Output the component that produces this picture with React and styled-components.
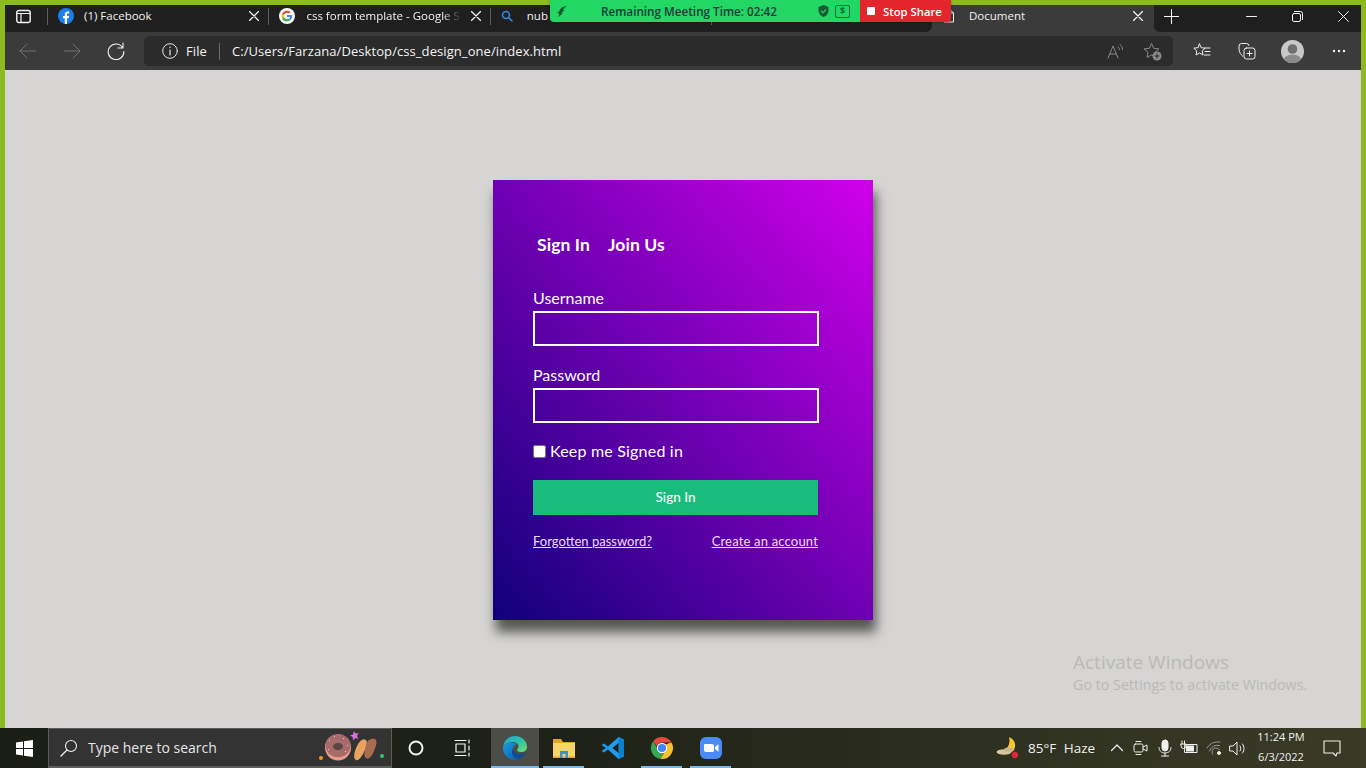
import React from 'react';
import styled, {createGlobalStyle} from 'styled-components';

const GlobalStyle = createGlobalStyle`
  html, body { margin: 0; padding: 0; height: 100%; overflow: hidden; background: #d6d5d3; }
  * { box-sizing: border-box; }
  body { font-family: "Open Sans", "Noto Sans", sans-serif; }
`;

const Screen = styled.div`
  position: relative;
  width: 1366px;
  height: 768px;
  display: flex;
  flex-direction: column;
  overflow: hidden;
`;

const Browser = styled.div`
  flex: 1;
  min-height: 0;
  display: flex;
  flex-direction: column;
  border: 5px solid #8dbb1f;
  border-bottom: 0;
`;

const TabBar = styled.div`
  height: 27px;
  background: #3b3b3b;
  display: flex;
  align-items: stretch;
  flex-shrink: 0;
`;

const TabStrip = styled.div`
  display: flex;
  background: #1f1f1f;
  border-radius: 0 0 6px 0;
`;

const TabRest = styled.div`
  flex: 1;
  display: flex;
  background: #1f1f1f;
  border-radius: 0 0 0 6px;
`;

const SideButton = styled.div`
  width: 42px;
  display: flex;
  align-items: center;
  justify-content: center;
  padding: 0 5px 5px 0;
`;

const Tab = styled.div`
  flex: 0 0 ${p => p.$w || 221.4}px;
  min-width: 0;
  height: 27px;
  display: flex;
  align-items: center;
  position: relative;
  padding: 0 ${p => p.$active ? 11 : 9}px 5px ${p => p.$active ? 10 : 11}px;
  gap: ${p => p.$active ? 13 : 10}px;
  color: #f2f2f2;
  font-size: 11.5px;
  background: ${p => p.$active ? '#3b3b3b' : 'transparent'};
  &::before {
    content: "";
    display: ${p => p.$sep ? 'block' : 'none'};
    position: absolute;
    left: 0;
    top: 3px;
    height: 17px;
    width: 1px;
    background: #5c5c5c;
  }
`;

const TabTitle = styled.span`
  flex: 1;
  min-width: 0;
  margin: -2px 0 0 ${p => p.$indent || 0}px;
  white-space: nowrap;
  ${p => p.$fade && `
    -webkit-mask-image: linear-gradient(to right, #000 88%, transparent);
    mask-image: linear-gradient(to right, #000 88%, transparent);
  `}
`;

const NewTab = styled.div`
  width: 36px;
  display: flex;
  align-items: center;
  justify-content: center;
  padding-bottom: 5px;
`;

const WindowControls = styled.div`
  margin-left: auto;
  margin-right: -5px;
  display: flex;
  align-items: center;
`;

const WindowButton = styled.div`
  width: 46px;
  height: 27px;
  display: flex;
  align-items: center;
  justify-content: center;
  padding-bottom: 5px;
`;

const Toolbar = styled.div`
  height: 38px;
  background: #3b3b3b;
  display: flex;
  align-items: center;
  padding-left: 1px;
  flex-shrink: 0;
`;

const NavButton = styled.div`
  width: ${p => p.$w || 44}px;
  height: 30px;
  display: flex;
  align-items: center;
  justify-content: center;
  flex-shrink: 0;
`;

const AddressBar = styled.div`
  width: 1030px;
  height: 30px;
  margin-left: 6px;
  margin-right: 6px;
  background: #2b2b2b;
  border-radius: 5px;
  display: flex;
  align-items: center;
  padding: 0 2px 0 18px;
  color: #f4f4f4;
  font-size: 13px;
  letter-spacing: .08px;
`;

const FileLabel = styled.span`
  margin-left: 8px;
  padding-right: 12px;
  border-right: 1px solid #6a6a6a;
  line-height: 17px;
`;

const Url = styled.span`
  margin-left: 12px;
  flex: 1;
`;

const Page = styled.main`
  flex: 1;
  min-height: 0;
  background: #d6d5d3;
  display: flex;
  justify-content: center;
  padding-top: 110px;
`;

const Card = styled.section`
  width: 380px;
  height: 440px;
  padding: 52px 55px 0 40px;
  color: #fff;
  background: linear-gradient(to top right, #0f007a, #d000ea);
  box-shadow: 3px 12px 11px #555553;
  font-family: "Lato", sans-serif;
  display: flex;
  flex-direction: column;
`;

const CardTabs = styled.div`
  display: flex;
  gap: 18px;
  padding-left: 4px;
  font-size: 17.5px;
  font-weight: 700;
  letter-spacing: .1px;
  line-height: 26px;
  margin-bottom: 30px;
`;

const Field = styled.div`
  margin-bottom: 19px;
`;

const FieldLabel = styled.label`
  display: block;
  font-size: 16px;
  line-height: 22px;
  margin: -1px 0 2px;
`;

const TextInput = styled.input`
  display: block;
  width: 286px;
  height: 35px;
  border: 2px solid #fff;
  background: transparent;
  border-radius: 0;
  outline: none;
`;

const KeepRow = styled.label`
  display: flex;
  align-items: center;
  gap: 4px;
  font-size: 16px;
  letter-spacing: .2px;
  line-height: 22px;
  margin: -2px 0 18px;
`;

const Check = styled.input`
  width: 13px;
  height: 13px;
  margin: 0;
`;

const SubmitButton = styled.button`
  width: 285px;
  height: 35px;
  padding: 0 0 2px;
  background: #1abc7c;
  border: 0;
  color: #fff;
  font-family: "Lato", sans-serif;
  font-size: 13.5px;
  font-weight: 500;
  margin-bottom: 17px;
`;

const LinkRow = styled.div`
  width: 285px;
  display: flex;
  justify-content: space-between;
`;

const CardLink = styled.a`
  color: #f0dcf8;
  font-size: 13px;
  letter-spacing: ${p => p.$wide ? '.18px' : '0'};
  line-height: 18px;
  text-decoration: underline;
`;

const Watermark = styled.div`
  position: absolute;
  left: 1073px;
  top: 650px;
  color: #bbbab8;
`;

const WatermarkTitle = styled.div`
  font-size: 19px;
  line-height: 24px;
`;

const WatermarkText = styled.div`
  font-size: 14.3px;
  line-height: 22px;
`;

const MeetingBar = styled.div`
  position: absolute;
  left: 550px;
  top: 0;
  height: 22px;
  display: flex;
  box-shadow: 0 0 3px rgba(0, 0, 0, .35);
  border-radius: 0 0 4px 4px;
  overflow: hidden;
`;

const MeetingInfo = styled.div`
  width: 310px;
  background: #22d764;
  color: #1c3a3c;
  display: flex;
  align-items: center;
  padding-left: 7px;
  font-size: 11.7px;
  font-weight: 600;
`;

const MeetingText = styled.span`
  margin-left: 34px;
  width: 217px;
  white-space: nowrap;
`;

const DollarBox = styled.span`
  width: 15px;
  height: 13px;
  margin-left: 6px;
  border: 1.5px solid #136b3a;
  border-radius: 2px;
  color: #136b3a;
  font-size: 9px;
  font-weight: 700;
  line-height: 10px;
  text-align: center;
`;

const StopShare = styled.div`
  width: 91px;
  background: #e3262e;
  color: #fff;
  display: flex;
  align-items: center;
  gap: 8px;
  padding-left: 7px;
  font-size: 11.3px;
  font-weight: 600;
  white-space: nowrap;
`;

const StopSquare = styled.span`
  width: 8px;
  height: 8px;
  background: #fff;
  border-radius: 1px;
`;

const Taskbar = styled.footer`
  height: 40px;
  flex-shrink: 0;
  display: flex;
  align-items: stretch;
  background: linear-gradient(to right, #1a1e14 0%, #1d2116 40%, #2f3220 75%, #3a3a26 100%);
  color: #f0f0f0;
`;

const StartButton = styled.div`
  width: 48px;
  display: flex;
  align-items: center;
  justify-content: center;
`;

const SearchBox = styled.div`
  width: 344px;
  background: #333333;
  border: 1px solid #5c5c5c;
  border-bottom-width: 2px;
  display: flex;
  align-items: center;
  padding-left: 11px;
  gap: 10px;
  font-size: 14px;
  color: #e6e6e6;
  position: relative;
`;

const SearchArt = styled.svg`
  position: absolute;
  right: 2px;
  top: 2px;
`;

const TaskIcon = styled.div`
  width: ${p => p.$w || 47}px;
  margin-left: ${p => p.$ml || 0}px;
  display: flex;
  align-items: center;
  justify-content: center;
  flex-shrink: 0;
  position: relative;
  background: ${p => p.$active ? '#4b4d46' : 'transparent'};
  &::after {
    content: "";
    display: ${p => p.$open ? 'block' : 'none'};
    position: absolute;
    left: ${p => p.$active ? 0 : 4}px;
    right: ${p => p.$active ? 0 : 4}px;
    bottom: 0;
    height: 2px;
    background: #76b9ed;
  }
`;

const Tray = styled.div`
  margin-left: auto;
  padding-right: 15px;
  display: flex;
  align-items: center;
`;

const TraySlot = styled.div`
  width: ${p => p.$w}px;
  height: 40px;
  display: flex;
  align-items: center;
  justify-content: center;
  flex-shrink: 0;
`;

const Weather = styled.span`
  font-size: 13.5px;
  white-space: nowrap;
  word-spacing: 4px;
  margin-left: 5px;
  width: 77px;
`;

const Clock = styled.div`
  width: 64px;
  text-align: center;
  font-size: 11px;
  line-height: 20px;
  margin-top: -2px;
`;

const line = {fill: 'none', stroke: 'currentColor', strokeWidth: 1, strokeLinecap: 'round', strokeLinejoin: 'round'};

const Icon = ({size = 16, vb = 16, color = '#e8e8e8', children}) => (
    <svg width={size} height={size} viewBox={`0 0 ${vb} ${vb}`} style={{color, display: 'block', flexShrink: 0}}>
        <g {...line}>{children}</g>
    </svg>
);

const CloseIcon = () => (
    <Icon size={10} vb={10} color="#f2f2f2"><path d="M.5.5l9 9M9.500.5l-9 9" strokeWidth="1.300"/></Icon>
);

const FacebookIcon = () => (
    <svg width="16" height="16" viewBox="0 0 16 16" style={{flexShrink: 0}}>
        <circle cx="8" cy="8" r="8" fill="#1a7df0"/>
        <path d="M6.800 16V10.200H5V8h1.800V6.400C6.800 4.500 7.900 3.500 9.600 3.500c.8 0 1.500.1 1.500.1v1.800h-.9c-.9 0-1.200.6-1.200 1.100V8h2l-.3 2.200H9v5.800z" fill="#fff"/>
    </svg>
);

const GoogleIcon = () => (
    <svg width="16" height="16" viewBox="0 0 16 16" style={{flexShrink: 0}}>
        <circle cx="8" cy="8" r="8" fill="#fff"/>
        <path d="M13.200 8.100c0-.4 0-.7-.1-1H8v2h3a2.500 2.500 0 0 1-1.100 1.600l1.700 1.300c1-.9 1.600-2.300 1.600-3.900z" fill="#4285f4"/>
        <path d="M8 13.300c1.400 0 2.600-.5 3.500-1.300l-1.700-1.300c-.5.3-1.100.5-1.800.5-1.400 0-2.600-.9-3-2.200H3.200v1.400A5.300 5.300 0 0 0 8 13.300z" fill="#34a853"/>
        <path d="M5 9a3.200 3.200 0 0 1 0-2V5.600H3.200a5.300 5.300 0 0 0 0 4.800z" fill="#fbbc05"/>
        <path d="M8 4.800c.8 0 1.500.3 2 .8l1.500-1.500A5.300 5.300 0 0 0 3.200 5.600L5 7c.4-1.300 1.600-2.200 3-2.200z" fill="#ea4335"/>
    </svg>
);

const EdgeLogo = () => (
    <svg width="26" height="26" viewBox="0 0 26 26">
        <defs>
            <linearGradient id="edgeTop" x1="0" y1="0" x2="1" y2="1">
                <stop offset="0" stopColor="#1aa5d8"/>
                <stop offset=".6" stopColor="#35c7a0"/>
                <stop offset="1" stopColor="#7be06a"/>
            </linearGradient>
            <linearGradient id="edgeLeft" x1="0" y1="0" x2="1" y2="1">
                <stop offset="0" stopColor="#1b9de2"/>
                <stop offset="1" stopColor="#0c59a4"/>
            </linearGradient>
        </defs>
        <path d="M1 12C2 5 7 1 13 1c7 0 12 5 12 11 0 3-2.500 5-6 5-2.500 0-4-1-4-2 0-.8 1.500-1.500 1.500-3.500C16.500 8.500 14 7 11 7 6 7 2 9 1 12z" fill="url(#edgeTop)"/>
        <path d="M1 12c-.5 7 5 13 12 13 2 0 4-.5 5-1.200-4 .7-8-2.300-8-7 0-3.500 2.500-6.800 5-8.300C9 6.500 2.500 8 1 12z" fill="url(#edgeLeft)"/>
        <path d="M10 16.800c0 4.700 4 7.700 8 7 2.500-1 5-3.300 5.800-6-1 .8-2.800 1.200-4.800 1.200-4 0-6.500-1.500-7-4-.8.300-2 .8-2 1.800z" fill="#0f4d96"/>
    </svg>
);

const FolderLogo = () => (
    <svg width="24" height="22" viewBox="0 0 24 22">
        <path d="M1 2h8l2 3h12v3H1z" fill="#e0a526"/>
        <rect x="1" y="6" width="22" height="15" fill="#f8d568"/>
        <rect x="1" y="19.500" width="22" height="1.500" fill="#e6a92a"/>
        <path d="M8 21v-7h8v7h-2.500v-4h-3v4z" fill="#3f8fd6"/>
    </svg>
);

const VsCodeLogo = () => (
    <svg width="24" height="24" viewBox="0 0 24 24">
        <path d="M17.500 1L23 3.500v17L17.500 23 7 13.500l-4 3-2.500-1.500 4.500-3-4.500-3L3 7.500l4 3z" fill="#1f9cf0"/>
        <path d="M17.500 1L23 3.500v17L17.500 23z" fill="#0f80cc"/>
        <path d="M17.500 7l-6 5 6 5z" fill="#1d2116"/>
    </svg>
);

const ChromeLogo = () => (
    <svg width="24" height="24" viewBox="0 0 24 24">
        <path d="M12 1a11 11 0 0 1 9.500 5.500H12a5.500 5.500 0 0 0-5.200 3.700L3.200 5.300A11 11 0 0 1 12 1z" fill="#e8453c"/>
        <path d="M3.200 5.300l4.800 8.400a5.500 5.500 0 0 0 5.500 3.600L10.500 22.900A11 11 0 0 1 3.200 5.300z" fill="#34a853"/>
        <path d="M21.500 6.500A11 11 0 0 1 10.500 22.900l5-8.600A5.500 5.500 0 0 0 16 8.200z" fill="#fbc02d"/>
        <circle cx="12" cy="12" r="5.200" fill="#fff"/>
        <circle cx="12" cy="12" r="4.100" fill="#4285f4"/>
    </svg>
);

const ZoomLogo = () => (
    <svg width="24" height="24" viewBox="0 0 24 24">
        <rect x="1" y="1" width="22" height="22" rx="6" fill="#4a8cf7"/>
        <path d="M5 9a1 1 0 0 1 1-1h7a2 2 0 0 1 2 2v5a1 1 0 0 1-1 1H7a2 2 0 0 1-2-2z" fill="#fff"/>
        <path d="M16 11l3-2.500c.3-.2.500 0 .5.300v6.400c0 .3-.2.500-.5.300L16 13z" fill="#fff"/>
    </svg>
);

const DonutArt = () => (
    <SearchArt width="72" height="34" viewBox="0 0 72 34">
        <circle cx="4" cy="27" r="2" fill="#f0a020"/>
        <circle cx="21" cy="16.500" r="13" fill="#e79c88"/>
        <ellipse cx="21" cy="14.500" rx="12.500" ry="11.500" fill="#a86a6a"/>
        <ellipse cx="21" cy="15.500" rx="5" ry="3.500" fill="#5a4642"/>
        <path d="M12 9l1 1M26 7l1 1M30 14l1 1M11 18l1 1M17 6l1-1M29 20l-1 1" stroke="#e8c4d8" strokeWidth="1"/>
        <path d="M39 29c-3-1-2-8 1-14s6-8 9-6c2 2 0 9-3 14s-5 7-7 6z" fill="#e8a45e"/>
        <path d="M49 27c-3-2-1-8 0-13s5-7 9-6c3 2 1 7-1 12s-5 9-8 7z" fill="#a86c52"/>
        <path d="M37 0l1.500 2.500L41.500 2 40 5l1.500 3-3-1-2.500 2.500-.3-3.500L33 4.500l3-1z" fill="#d86fe0"/>
        <circle cx="65" cy="25" r="2" fill="#35c76a"/>
    </SearchArt>
);

function App() {
    return (
        <Screen>
            <GlobalStyle/>
            <Browser>
                <TabBar>
                    <TabStrip>
                        <SideButton>
                            <Icon size={15} vb={15} color="#f4f4f4">
                                <rect x=".8" y="1.500" width="13.400" height="12" rx="2" strokeWidth="1.400"/>
                                <path d="M.8 4.500h13.400M5 4.500v9" strokeWidth="1.200"/>
                            </Icon>
                        </SideButton>
                        <Tab $sep>
                            <FacebookIcon/>
                            <TabTitle>(1) Facebook</TabTitle>
                            <CloseIcon/>
                        </Tab>
                        <Tab $sep>
                            <GoogleIcon/>
                            <TabTitle $indent={1} $fade>css form template - Google S</TabTitle>
                            <CloseIcon/>
                        </Tab>
                        <Tab $sep>
                            <Icon size={12} vb={12} color="#2f8fe0">
                                <circle cx="5" cy="5" r="3.500" strokeWidth="1.500"/>
                                <path d="M8 8l3 3" strokeWidth="1.500"/>
                            </Icon>
                            <TabTitle $indent={4}>nub</TabTitle>
                        </Tab>
                        <Tab $sep $w={220.800}/>
                    </TabStrip>
                    <Tab $active $w={222}>
                        <Icon size={14} vb={14} color="#efefef">
                            <path d="M2.500 1h6l3 3v9h-9zM8.500 1v3h3"/>
                        </Icon>
                        <TabTitle>Document</TabTitle>
                        <CloseIcon/>
                    </Tab>
                    <TabRest>
                        <NewTab>
                            <Icon size={15} vb={15} color="#fff"><path d="M7.500 .5v14M.5 7.500h14"/></Icon>
                        </NewTab>
                        <WindowControls>
                            <WindowButton>
                                <Icon size={11} vb={11} color="#f0f0f0"><path d="M.5 5.500h10"/></Icon>
                            </WindowButton>
                            <WindowButton>
                                <Icon size={11} vb={11} color="#f0f0f0">
                                    <rect x=".5" y="2.500" width="8" height="8" rx="1.500"/>
                                    <path d="M2.500.5h6a2 2 0 0 1 2 2v6"/>
                                </Icon>
                            </WindowButton>
                            <WindowButton>
                                <Icon size={11} vb={11} color="#f0f0f0"><path d="M.5.5l10 10M10.500.5l-10 10"/></Icon>
                            </WindowButton>
                        </WindowControls>
                    </TabRest>
                </TabBar>
                <Toolbar>
                    <NavButton>
                        <Icon size={18} vb={18} color="#707070"><path d="M17 9H1M8 2L1 9l7 7"/></Icon>
                    </NavButton>
                    <NavButton>
                        <Icon size={18} vb={18} color="#707070"><path d="M1 9h16M10 2l7 7-7 7"/></Icon>
                    </NavButton>
                    <NavButton>
                        <Icon size={18} vb={18} color="#efefef">
                            <path d="M15.500 5.500A7.800 7.800 0 1 0 16.800 9.500M16 1v5h-5" strokeWidth="1.100"/>
                        </Icon>
                    </NavButton>
                    <AddressBar>
                        <Icon size={16} vb={16} color="#e6e6e6">
                            <circle cx="8" cy="8" r="7.300"/>
                            <path d="M8 7v5M8 4v.6" strokeWidth="1.200"/>
                        </Icon>
                        <FileLabel>File</FileLabel>
                        <Url>C:/Users/Farzana/Desktop/css_design_one/index.html</Url>
                        <NavButton $w={36}>
                            <Icon size={17} vb={17} color="#8a8a8a">
                                <path d="M1 15L6 3l5 12M2.800 11h6.400M11 4c1 .6 1.500 1.400 1.500 2.500M13 1.500c1.500 1 2.500 2.800 2.500 5"/>
                            </Icon>
                        </NavButton>
                        <NavButton $w={38}>
                            <svg width="19" height="19" viewBox="0 0 19 19">
                                <path d="M8.500 1.500l2.200 4.800 5.200.6-3.900 3.500 1 5.100-4.500-2.600-4.500 2.600 1-5.100L1.100 6.900l5.200-.6z" fill="none" stroke="#8a8a8a" strokeWidth="1" strokeLinejoin="round"/>
                                <circle cx="14" cy="14" r="4.500" fill="#8a8a8a"/>
                                <path d="M14 11.500v5M11.500 14h5" stroke="#2b2b2b" strokeWidth="1"/>
                            </svg>
                        </NavButton>
                    </AddressBar>
                    <NavButton $w={46}>
                        <Icon size={18} vb={18} color="#efefef">
                            <path d="M6.500 2l1.700 3.700 4 .5-3 2.700.8 4L6.500 11 3 13l.8-4-3-2.800 4-.5zM12 6h5M12 9.500h5M11 13h6"/>
                        </Icon>
                    </NavButton>
                    <NavButton $w={43}>
                        <Icon size={18} vb={18} color="#efefef">
                            <rect x="6" y="6" width="11" height="11" rx="2.500"/>
                            <path d="M11.500 9v5M9 11.500h5M5 14.500C3 13 1 10 1 7V4a2.500 2.500 0 0 1 2.500-2.500h5A2.500 2.500 0 0 1 11 3.500"/>
                        </Icon>
                    </NavButton>
                    <NavButton $w={49}>
                        <svg width="23" height="23" viewBox="0 0 23 23">
                            <defs><clipPath id="avatar"><circle cx="11.500" cy="11.500" r="11.500"/></clipPath></defs>
                            <circle cx="11.500" cy="11.500" r="11.500" fill="#c8c8c8"/>
                            <g clipPath="url(#avatar)">
                                <circle cx="11.500" cy="9" r="4.800" fill="#6f6f6f"/>
                                <ellipse cx="11.500" cy="21" rx="9.500" ry="6.500" fill="#8a8a8a"/>
                            </g>
                        </svg>
                    </NavButton>
                    <NavButton $w={44}>
                        <svg width="14" height="4" viewBox="0 0 14 4">
                            <circle cx="2" cy="2" r="1.200" fill="#f0f0f0"/>
                            <circle cx="7" cy="2" r="1.200" fill="#f0f0f0"/>
                            <circle cx="12" cy="2" r="1.200" fill="#f0f0f0"/>
                        </svg>
                    </NavButton>
                </Toolbar>
                <Page>
                    <Card>
                        <CardTabs>
                            <span>Sign In</span>
                            <span>Join Us</span>
                        </CardTabs>
                        <Field>
                            <FieldLabel>Username</FieldLabel>
                            <TextInput type="text"/>
                        </Field>
                        <Field>
                            <FieldLabel>Password</FieldLabel>
                            <TextInput type="password"/>
                        </Field>
                        <KeepRow><Check type="checkbox"/>Keep me Signed in</KeepRow>
                        <SubmitButton type="button">Sign In</SubmitButton>
                        <LinkRow>
                            <CardLink href="#">Forgotten password?</CardLink>
                            <CardLink href="#" $wide>Create an account</CardLink>
                        </LinkRow>
                    </Card>
                </Page>
            </Browser>
            <Watermark>
                <WatermarkTitle>Activate Windows</WatermarkTitle>
                <WatermarkText>Go to Settings to activate Windows.</WatermarkText>
            </Watermark>
            <MeetingBar>
                <MeetingInfo>
                    <svg width="10" height="11" viewBox="0 0 10 11">
                        <path d="M10 0C6 .5 3 2 2.500 5L0 7l2 .5L1.500 11 5 8c0-2 1-3 3-3.500L6 4c1-2 2.500-3 4-4z" fill="#175a32"/>
                    </svg>
                    <MeetingText>Remaining Meeting Time: 02:42</MeetingText>
                    <svg width="11" height="12" viewBox="0 0 11 12">
                        <path d="M5.500 0l5 2v3.500c0 3-2 5.300-5 6.500-3-1.200-5-3.500-5-6.500V2z" fill="#175a32"/>
                        <path d="M3 5.800l2 2 3-3.300" fill="none" stroke="#22d764" strokeWidth="1.200"/>
                    </svg>
                    <DollarBox>$</DollarBox>
                </MeetingInfo>
                <StopShare><StopSquare/>Stop Share</StopShare>
            </MeetingBar>
            <Taskbar>
                <StartButton>
                    <svg width="17" height="17" viewBox="0 0 17 17">
                        <path d="M0 2.500l7-1v6.500H0zM8 1.300L17 0v8H8zM0 9h7v6.500l-7-1zM8 9h9v8l-9-1.300z" fill="#fff"/>
                    </svg>
                </StartButton>
                <SearchBox>
                    <Icon size={18} vb={18} color="#f0f0f0">
                        <circle cx="11" cy="7" r="5.500" strokeWidth="1.100"/>
                        <path d="M7 11l-6 6" strokeWidth="1.300"/>
                    </Icon>
                    <span>Type here to search</span>
                    <DonutArt/>
                </SearchBox>
                <TaskIcon>
                    <svg width="16" height="16" viewBox="0 0 16 16">
                        <circle cx="8" cy="8" r="6.500" fill="none" stroke="#f4f4f4" strokeWidth="2"/>
                    </svg>
                </TaskIcon>
                <TaskIcon>
                    <Icon size={18} vb={18} color="#f4f4f4">
                        <path d="M1 1.500h11M1 16.500h11M2 5h9v8H2zM15 1v3M15 7v4M15 14v3" strokeWidth="1.200"/>
                    </Icon>
                </TaskIcon>
                <TaskIcon $active $open $w={48} $ml={5}><EdgeLogo/></TaskIcon>
                <TaskIcon $open $w={49}><FolderLogo/></TaskIcon>
                <TaskIcon $w={49}><VsCodeLogo/></TaskIcon>
                <TaskIcon $open $w={49}><ChromeLogo/></TaskIcon>
                <TaskIcon $open $w={49}><ZoomLogo/></TaskIcon>
                <Tray>
                    <TraySlot $w={30}>
                        <svg width="24" height="22" viewBox="0 0 24 22">
                            <path d="M13 0c5 2 8 7 5 13-2 3-8 4-12 1 5-1 9-7 7-14z" fill="#f6c832"/>
                            <ellipse cx="8" cy="15" rx="7.500" ry="2.800" fill="#d8c49a"/>
                            <ellipse cx="13" cy="12.500" rx="5" ry="2" fill="#cbb48c"/>
                            <circle cx="19" cy="18" r="3.200" fill="#e0243c"/>
                        </svg>
                    </TraySlot>
                    <Weather>85°F Haze</Weather>
                    <TraySlot $w={24}>
                        <Icon size={12} vb={12} color="#f0f0f0"><path d="M.5 8.500L6 3l5.500 5.500" strokeWidth="1.200"/></Icon>
                    </TraySlot>
                    <TraySlot $w={24}>
                        <Icon size={16} vb={16} color="#f0f0f0">
                            <rect x="1" y="4" width="9" height="8" rx="1.500"/>
                            <path d="M10 7l4-2v6l-4-2M3 1.500h5M3 14.500h5"/>
                        </Icon>
                    </TraySlot>
                    <TraySlot $w={23}>
                        <Icon size={18} vb={18} color="#f0f0f0">
                            <rect x="6" y="1" width="6" height="11" rx="3" fill="#f0f0f0"/>
                            <path d="M3 8.500c0 3.500 2.500 5.500 6 5.500s6-2 6-5.500M9 14v3M5.500 17h7"/>
                        </Icon>
                    </TraySlot>
                    <TraySlot $w={26}>
                        <Icon size={18} vb={18} color="#f0f0f0">
                            <rect x="5" y="5.500" width="12" height="8"/>
                            <rect x="6" y="6.500" width="8" height="6" fill="#f0f0f0" stroke="none"/>
                            <path d="M2 2v3M4.500 2v3M1 5h5v2a2.500 2.500 0 0 1-5 0z"/>
                        </Icon>
                    </TraySlot>
                    <TraySlot $w={24}>
                        <Icon size={16} vb={16} color="#9a9a9a">
                            <path d="M1 8a12 12 0 0 1 13-6M3.500 11a8 8 0 0 1 10-5.500M6.500 14a4 4 0 0 1 7-4"/>
                            <circle cx="13" cy="13" r="1.500" fill="#f0f0f0" stroke="#f0f0f0"/>
                        </Icon>
                    </TraySlot>
                    <TraySlot $w={23}>
                        <Icon size={17} vb={17} color="#f0f0f0">
                            <path d="M1 6h3l4-4v13l-4-4H1zM11 6c1 1.500 1 3.500 0 5M13.500 4c2 2.500 2 6.500 0 9"/>
                        </Icon>
                    </TraySlot>
                    <Clock>11:24 PM<br/>6/3/2022</Clock>
                    <TraySlot $w={38}>
                        <Icon size={18} vb={18} color="#f0f0f0">
                            <path d="M1 2h16v12h-3l-1 3-3-3H1z" strokeWidth="1.100"/>
                        </Icon>
                    </TraySlot>
                </Tray>
            </Taskbar>
        </Screen>
    );
}

export default App;
